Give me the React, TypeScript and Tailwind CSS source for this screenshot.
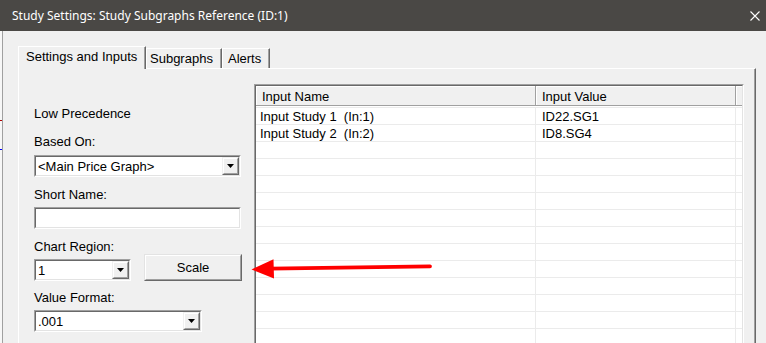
import React from "react";

function DropButton() {
  return (
    <div className="h-full w-[17px] flex-none border border-t-[#f0f0f0] border-l-[#f0f0f0] border-r-[#696969] border-b-[#696969]">
      <div className="flex h-full items-center justify-center border border-t-white border-l-white border-r-[#a0a0a0] border-b-[#a0a0a0] bg-[#f0f0f0]">
        <svg width="7" height="4" viewBox="0 0 7 4">
          <polygon points="0,0 7,0 3.5,4" fill="#000" />
        </svg>
      </div>
    </div>
  );
}

function Sunken({ className, children }: { className: string; children?: React.ReactNode }) {
  return (
    <div className={`${className} h-[22px] border border-t-[#a0a0a0] border-l-[#a0a0a0] border-r-white border-b-white`}>
      <div className="flex h-full border border-t-[#696969] border-l-[#696969] border-r-[#e3e3e3] border-b-[#e3e3e3] bg-white">
        {children}
      </div>
    </div>
  );
}

function Combo({ value, className }: { value: string; className: string }) {
  return (
    <Sunken className={className}>
      <div className="flex flex-1 items-center overflow-hidden whitespace-nowrap pl-[2px] leading-[15px]">{value}</div>
      <DropButton />
    </Sunken>
  );
}

const rows = [
  { name: "Input Study 1  (In:1)", value: "ID22.SG1" },
  { name: "Input Study 2  (In:2)", value: "ID8.SG4" },
  ...Array.from({ length: 12 }, () => ({ name: "", value: "" })),
];

export default function App() {
  return (
    <div className="relative h-[343px] w-[766px] overflow-hidden bg-[#f0f0f0] font-['Liberation_Sans',Arial,sans-serif] text-[13px] text-black">
      {/* Title bar */}
      <div className="flex h-[31px] items-center justify-between bg-[#4a4845] pl-[12px] pr-[6px] font-['Noto_Sans',sans-serif] text-[12px] text-white">
        <span>Study Settings: Study Subgraphs Reference (ID:1)</span>
        <svg width="10" height="10" viewBox="0 0 10 10" className="mr-[0px]">
          <path d="M0.5 0.5 L9.5 9.5 M9.5 0.5 L0.5 9.5" stroke="#fff" strokeWidth="1.1" />
        </svg>
      </div>

      <div className="flex h-[312px]">
        {/* window behind */}
        <div className="flex w-[3px] flex-none flex-col border-r border-[#a0a0a0] bg-[#f7f7f7]">
          <div className="mt-[89px] h-[1px] bg-[#b00000]" />
          <div className="mt-[28px] h-[1px] bg-[#0000ff]" />
        </div>

        <div className="flex flex-1 flex-col pl-[15px] pt-[15px]">
          {/* Tabs */}
          <div className="relative z-10 flex h-[22px] items-end">
            <div className="-mb-px flex h-[23px] w-[128px] items-start border-l border-t border-r border-l-white border-t-white border-r-[#696969] bg-[#f0f0f0] pl-[7px] pt-[2px] leading-[15px] shadow-[inset_-1px_0_0_#a0a0a0]">
              Settings and Inputs
            </div>
            <div className="flex h-[20px] w-[76px] items-start border-l border-t border-r border-l-white border-t-white border-r-[#696969] pl-[3px] pt-[2px] leading-[15px] shadow-[inset_-1px_0_0_#a0a0a0]">
              Subgraphs
            </div>
            <div className="flex h-[20px] w-[48px] items-start border-l border-t border-r border-l-white border-t-white border-r-[#696969] pl-[5px] pt-[2px] leading-[15px] shadow-[inset_-1px_0_0_#a0a0a0]">
              Alerts
            </div>
          </div>

          {/* Panel */}
          <div className="flex w-[738px] flex-1 border-l border-t border-r border-l-white border-t-white border-r-[#696969] pl-[15px] shadow-[inset_-1px_0_0_#a0a0a0]">
            <div className="flex w-[208px] flex-none flex-col pt-[37px] leading-[15px]">
              <div>Low Precedence</div>
              <div className="mt-[13px]">Based On:</div>
              <Combo value="<Main Price Graph>" className="mt-[6px] w-[207px]" />
              <div className="mt-[10px]">Short Name:</div>
              <Sunken className="mt-[5px] w-[207px]" />
              <div className="mt-[10px]">Chart Region:</div>
              <div className="flex items-end">
                <Combo value="1" className="w-[97px]" />
                <div className="ml-[13px] h-[27px] w-[98px] border border-t-[#e3e3e3] border-l-[#e3e3e3] border-r-[#696969] border-b-[#696969]">
                  <div className="flex h-full items-center justify-center border border-t-white border-l-white border-r-[#a0a0a0] border-b-[#a0a0a0] bg-[#f0f0f0]">
                    Scale
                  </div>
                </div>
              </div>
              <div className="mt-[9px]">Value Format:</div>
              <Combo value=".001" className="mt-[5px] w-[168px]" />
            </div>

            {/* Inputs list */}
            <div className="ml-[12px] mt-[15px] h-[300px] w-[490px] flex-none border border-t-[#a0a0a0] border-l-[#a0a0a0] border-r-white border-b-white">
              <div className="flex h-full flex-col overflow-hidden border border-t-[#696969] border-l-[#696969] border-r-[#e3e3e3] border-b-[#e3e3e3] bg-white leading-[15px]">
                <div className="flex h-[20px] flex-none bg-[#f0f0f0]">
                  <div className="w-[280px] border-b border-r border-[#a0a0a0] pl-[6px] pt-[3px] shadow-[inset_1px_1px_0_#fff]">Input Name</div>
                  <div className="w-[200px] border-b border-r border-[#a0a0a0] pl-[6px] pt-[3px] shadow-[inset_1px_1px_0_#fff]">Input Value</div>
                  <div className="w-[6px] border-b border-[#a0a0a0] shadow-[inset_1px_1px_0_#fff]" />
                </div>
                <div className="mt-[1px] border-t border-[#ebebeb]">
                  {rows.map((r, i) => (
                    <div key={i} className="flex h-[17px] border-b border-[#ebebeb]">
                      <div className="w-[280px] whitespace-pre border-r border-[#ebebeb] pl-[4px] pt-[1px]">{r.name}</div>
                      <div className="w-[200px] border-r border-[#ebebeb] pl-[6px] pt-[1px]">{r.value}</div>
                      <div className="w-[6px]" />
                    </div>
                  ))}
                </div>
              </div>
            </div>
          </div>
        </div>
      </div>

      {/* Annotation arrow */}
      <svg className="pointer-events-none absolute left-0 top-0" width="766" height="343" viewBox="0 0 766 343">
        <line x1="430" y1="266.3" x2="270" y2="268.6" stroke="#ff0000" strokeWidth="3.8" strokeLinecap="round" />
        <polygon points="251.5,269.4 273.5,259.2 274,278.4" fill="#ff0000" />
      </svg>
    </div>
  );
}
